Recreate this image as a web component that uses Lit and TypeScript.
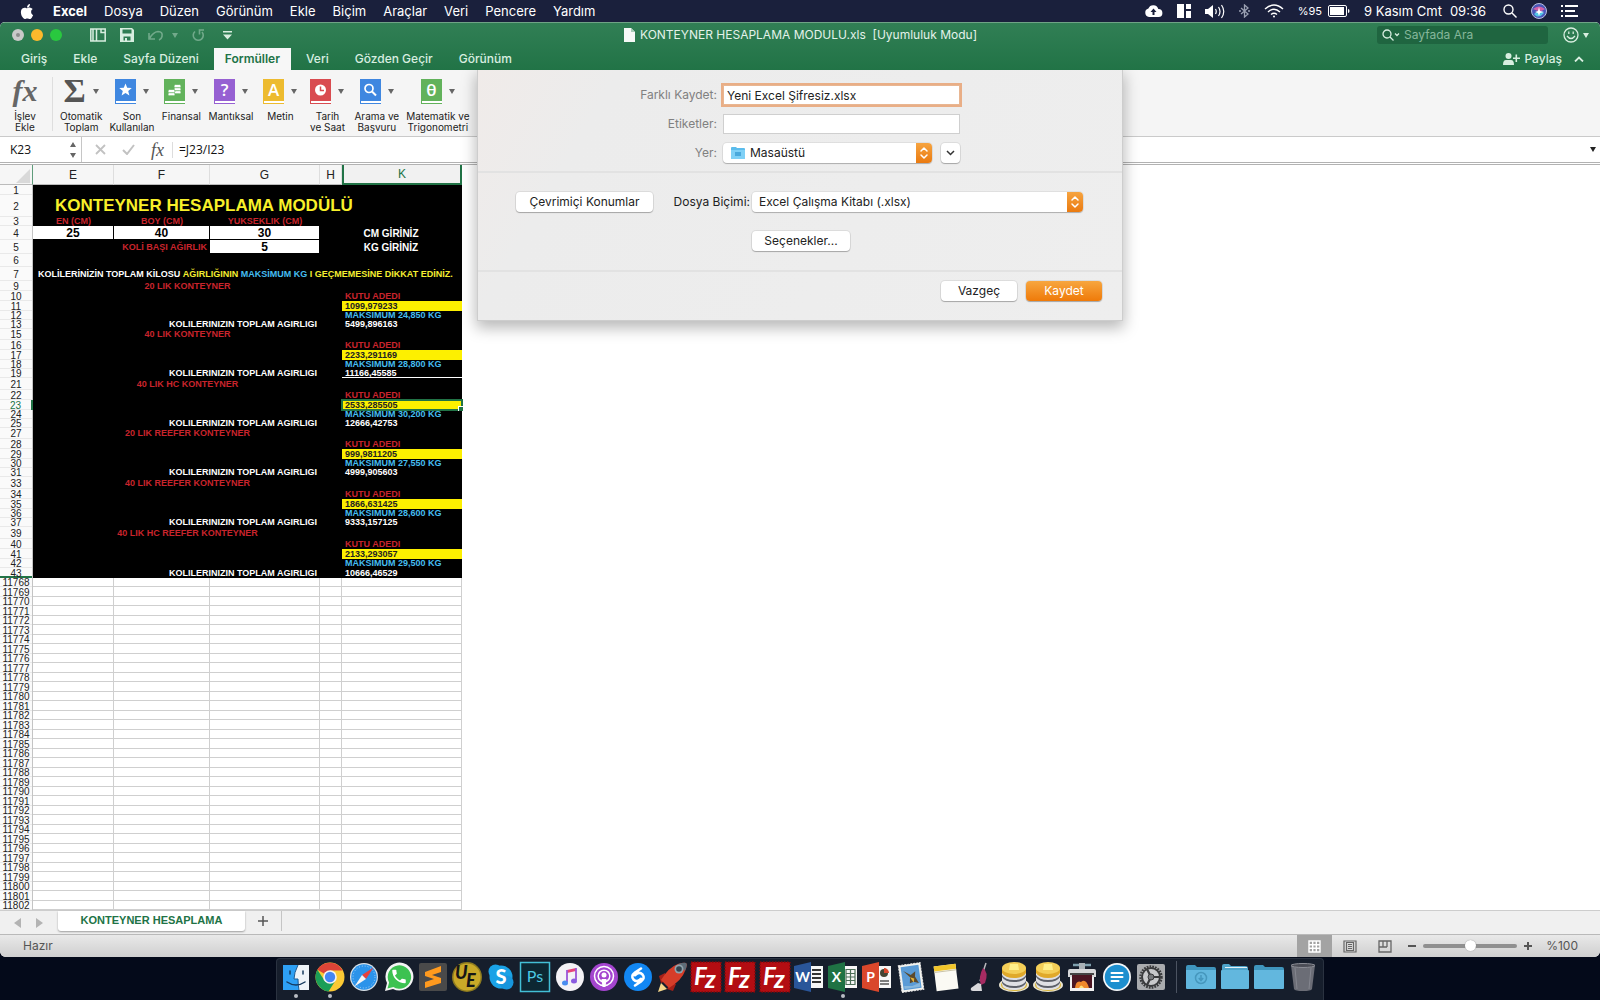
import { LitElement, html, svg, css, nothing, TemplateResult } from "lit";
import { customElement } from "lit/decorators.js";
import { classMap } from "lit/directives/class-map.js";
import { styleMap } from "lit/directives/style-map.js";

/* ---------- Sheet data ---------- */

interface Row {
  n: number;
  h: number;
  kind: string;
  a?: string;
  b?: string;
}

const containers: [string, string, string, string, number][] = [
  ["20 LIK KONTEYNER", "1099,979233", "24,850", "5499,896163", 10],
  ["40 LIK KONTEYNER", "2233,291169", "28,800", "11166,45585", 11],
  ["40 LIK HC KONTEYNER", "2533,285505", "30,200", "12666,42753", 12],
  ["20 LIK REEFER KONTEYNER", "999,9811205", "27,550", "4999,905603", 11],
  ["40 LIK REEFER KONTEYNER", "1866,631425", "28,600", "9333,157125", 12],
  ["40 LIK HC REEFER KONTEYNER", "2133,293057", "29,500", "10666,46529", 12],
];

const rows: Row[] = [
  { n: 1, h: 10, kind: "blank" },
  { n: 2, h: 22, kind: "title" },
  { n: 3, h: 9, kind: "dims" },
  { n: 4, h: 14, kind: "values" },
  { n: 5, h: 14, kind: "weight" },
  { n: 6, h: 13, kind: "blank" },
  { n: 7, h: 14, kind: "warning" },
];
containers.forEach(([name, count, max, total, h], i) => {
  const n = 9 + i * 6;
  rows.push(
    { n, h, kind: "name", a: name },
    { n: n + 1, h: 10, kind: "label" },
    { n: n + 2, h: 10, kind: "count", a: count },
    { n: n + 3, h: 9, kind: "max", a: `MAKSIMUM ${max} KG` },
    { n: n + 4, h: n === 39 ? 10 : 9, kind: "total", a: "KOLILERINIZIN TOPLAM AGIRLIGI", b: total },
  );
});
for (let i = 0; i < 35; i++) {
  rows.push({ n: 11768 + i, h: i % 2 ? 10 : 9, kind: "empty" });
}

@customElement("excel-sheet")
export class ExcelSheet extends LitElement {
  static styles = css`
    :host {
      display: block;
      flex: 1 1 0;
      min-height: 0;
      overflow: hidden;
      background: #fff;
    }
    table,
    thead,
    tbody {
      display: block;
    }
    table {
      font: bold 9px/9px "Liberation Sans", Arial, sans-serif;
      width: max-content;
    }
    tr {
      display: grid;
      grid-template-columns: 33px 81px 96px 110px 22px 120px;
    }
    th,
    td {
      box-sizing: border-box;
      padding: 0;
      display: flex;
      align-items: center;
      justify-content: center;
      white-space: nowrap;
      min-width: 0;
      min-height: 0;
    }
    .head {
      height: 20px;
    }
    .head th {
      font-size: 12px;
      line-height: 14px;
      font-weight: 400;
      color: #222;
      background: #f6f6f6;
      border-right: 1px solid #dedede;
      border-bottom: 1px solid #bbb;
    }
    .head .corner {
      border-right: 1px solid #5f9c7b;
      justify-content: flex-end;
      align-items: flex-end;
      padding: 0 2px 1px 0;
    }
    .head .picked {
      background: #f1f1f1;
      color: #217346;
      border: 2px solid #217346;
      border-top: 0;
    }
    .num {
      font-size: 10px;
      line-height: 9px;
      font-weight: 400;
      color: #222;
      background: #fafafa;
      border-right: 1px solid #c4c4c4;
      box-shadow: inset 0 -1px #e9e9e9;
    }
    .num.current {
      color: #217346;
      border-right: 2px solid #217346;
    }
    .num.frozen {
      box-shadow: inset 0 -2px #217346;
    }
    .dark {
      background: #000;
      color: #fff;
    }
    .span5 {
      grid-column: span 5;
    }
    .span4 {
      grid-column: span 4;
    }
    .span2 {
      grid-column: span 2;
    }
    .span3 {
      grid-column: span 3;
    }
    .title td {
      justify-content: flex-start;
      padding-left: 22px;
      font-size: 17px;
      line-height: 20px;
      color: #f8f02a;
    }
    .red {
      color: #c9242c;
    }
    .yellow {
      color: #f5ee31;
    }
    .cyan {
      color: #45bdf0;
    }
    .right {
      justify-content: flex-end;
      padding-right: 3px;
    }
    .left {
      justify-content: flex-start;
      padding-left: 3px;
    }
    .field {
      background: #fff;
      color: #000;
      font-size: 12px;
      line-height: 12px;
      border-right: 1px solid #000;
      border-bottom: 1px solid #000;
    }
    .unit {
      font-size: 10px;
      padding-right: 22px;
    }
    .warning td {
      justify-content: flex-start;
      padding-left: 5px;
      white-space: pre;
    }
    .count .left {
      background: #fdf000;
      color: #222;
    }
    .total .line {
      border-bottom: 1px solid #fff;
    }
    .count .active {
      position: relative;
      z-index: 1;
      border: 1px solid #217346;
      outline: 1px solid #217346;
      padding-left: 2px;
    }
    .handle {
      position: absolute;
      right: -2px;
      bottom: -2px;
      width: 4px;
      height: 4px;
      background: #217346;
      border-left: 1px solid #fff;
      border-top: 1px solid #fff;
    }
    .empty td {
      border-right: 1px solid #cfcfcf;
      border-bottom: 1px solid #cfcfcf;
    }
  `;

  private cells(r: Row): TemplateResult | TemplateResult[] {
    switch (r.kind) {
      case "title":
        return html`<td class="dark span5">KONTEYNER HESAPLAMA MODÜLÜ</td>`;
      case "dims":
        return html`<td class="dark red">EN (CM)</td>
          <td class="dark red">BOY (CM)</td>
          <td class="dark red">YUKSEKLIK (CM)</td>
          <td class="dark span2"></td>`;
      case "values":
        return html`<td class="field">25</td>
          <td class="field">40</td>
          <td class="field">30</td>
          <td class="dark"></td>
          <td class="dark unit">CM GİRİNİZ</td>`;
      case "weight":
        return html`<td class="dark red span2 right">KOLİ BAŞI AĞIRLIK</td>
          <td class="field">5</td>
          <td class="dark"></td>
          <td class="dark unit">KG GİRİNİZ</td>`;
      case "warning":
        return html`<td class="dark span5"><span>KOLİLERİNİZİN TOPLAM KİLOSU </span><span class="yellow">AĞIRLIĞININ </span><span class="cyan">MAKSİMUM KG </span><span class="yellow">I GEÇMEMESİNE DİKKAT EDİNİZ.</span></td>`;
      case "name":
        return html`<td class="dark red span4">${r.a}</td>
          <td class="dark"></td>`;
      case "label":
        return html`<td class="dark span4"></td>
          <td class="dark red left">KUTU ADEDI</td>`;
      case "count":
        return html`<td class="dark span4"></td>
          <td class=${classMap({ left: true, active: r.n === 23 })}>
            ${r.a}${r.n === 23 ? html`<span class="handle"></span>` : nothing}
          </td>`;
      case "max":
        return html`<td class="dark span4"></td>
          <td class="dark cyan left">${r.a}</td>`;
      case "total":
        return html`<td class="dark span3 right">${r.a}</td>
          <td class="dark"></td>
          <td class=${classMap({ dark: true, left: true, line: r.n === 19 })}>${r.b}</td>`;
      case "empty":
        return [0, 1, 2, 3, 4].map(() => html`<td></td>`);
      default:
        return html`<td class="dark span5"></td>`;
    }
  }

  render() {
    return html`<table aria-label="Konteyner hesaplama">
      <thead>
        <tr class="head">
          <th class="corner" scope="col">
            <svg width="14" height="14" aria-hidden="true"><path d="M14 0v14H0z" fill="#d9d9d9" /></svg>
          </th>
          ${["E", "F", "G", "H", "K"].map(
            (c) => html`<th scope="col" class=${classMap({ picked: c === "K" })}>${c}</th>`,
          )}
        </tr>
      </thead>
      <tbody>
        ${rows.map(
          (r) => html`<tr class=${r.kind} style=${styleMap({ height: `${r.h}px` })}>
            <th scope="row" class=${classMap({ num: true, current: r.n === 23, frozen: r.n === 43 })}>${r.n}</th>
            ${this.cells(r)}
          </tr>`,
        )}
      </tbody>
    </table>`;
  }
}

/* ---------- Save sheet ---------- */

const arrows = html`<svg class="arrows" viewBox="0 0 16 20" width="16" height="20" aria-hidden="true">
  <path d="M5 8l3-3 3 3M5 12l3 3 3-3" fill="none" stroke="#fff" stroke-width="1.5" stroke-linecap="round" stroke-linejoin="round" />
</svg>`;

@customElement("save-sheet")
export class SaveSheet extends LitElement {
  static styles = css`
    :host {
      display: block;
      box-sizing: border-box;
      width: 644px;
      max-width: 100%;
      background: linear-gradient(120deg, #f0ebe9 0, #ececec 18%, #eeeeee);
      box-shadow:
        0 0 0 1px #cdcdcd,
        0 6px 14px 2px rgba(0, 0, 0, 0.28);
      clip-path: inset(0 -30px -40px -30px);
      font-size: 12px;
      line-height: 16px;
      color: #222;
    }
    form {
      display: flex;
      flex-direction: column;
    }
    input,
    select,
    button {
      font: inherit;
      color: inherit;
      margin: 0;
      box-sizing: border-box;
      height: 20px;
    }
    .top {
      display: grid;
      grid-template-columns: 239px 237px;
      column-gap: 6px;
      row-gap: 9px;
      align-items: center;
      padding: 15px 0 8px;
    }
    .top label {
      text-align: right;
      color: #808080;
    }
    input {
      width: 100%;
      border: 1px solid #cfcfcf;
      background: #fff;
      padding: 0 3px;
      outline: 0;
    }
    .focus {
      border-color: #e8b692;
      box-shadow: 0 0 0 2px #e9ae86;
    }
    .place {
      display: flex;
      gap: 9px;
    }
    .pop {
      display: flex;
      position: relative;
      flex: 1;
      height: 20px;
      border-radius: 4px;
      background: #fff;
      box-shadow:
        0 0 0 1px rgba(0, 0, 0, 0.06),
        0 1px 1px rgba(0, 0, 0, 0.22);
    }
    .pop select {
      appearance: none;
      border: 0;
      background: none;
      flex: 1;
      min-width: 0;
      padding: 0 20px 0 7px;
      outline: 0;
    }
    .pop .withicon {
      padding-left: 27px;
    }
    .arrows {
      position: absolute;
      right: 0;
      top: 0;
      background: linear-gradient(#f6a440, #ea7a10);
      border-radius: 0 4px 4px 0;
      pointer-events: none;
    }
    .folder {
      position: absolute;
      left: 7px;
      top: 3px;
    }
    button {
      border: 0;
      border-radius: 4px;
      background: #fff;
      box-shadow:
        0 0 0 1px rgba(0, 0, 0, 0.07),
        0 1px 1px rgba(0, 0, 0, 0.25);
      padding: 0;
    }
    .more {
      width: 19px;
      display: grid;
      place-items: center;
    }
    .mid {
      display: grid;
      grid-template-columns: 137px 99px 331px;
      row-gap: 19px;
      align-items: center;
      padding: 19px 39px 19px 38px;
      border-top: 2px solid #e2e2e2;
      border-bottom: 2px solid #e2e2e2;
    }
    .mid label {
      text-align: right;
      padding-right: 2px;
    }
    .options {
      grid-column: 3;
      width: 98px;
    }
    .foot {
      display: flex;
      justify-content: flex-end;
      gap: 9px;
      padding: 9px 20px 19px;
    }
    .foot button {
      width: 76px;
    }
    .foot .save {
      color: #fff;
      background: linear-gradient(#f7a63f, #ef7a09);
    }
  `;

  render() {
    return html`<form @submit=${(e: Event) => e.preventDefault()}>
      <div class="top">
        <label for="name">Farklı Kaydet:</label>
        <input id="name" class="focus" value="Yeni Excel Şifresiz.xlsx" />
        <label for="tags">Etiketler:</label>
        <input id="tags" />
        <label for="where">Yer:</label>
        <div class="place">
          <div class="pop">
            <svg class="folder" width="16" height="14" viewBox="0 0 16 14" aria-hidden="true">
              <path d="M1 2q0-1 1-1h4l1 1h7q1 0 1 1v9q0 1-1 1H2q-1 0-1-1z" fill="#5bbcec" />
              <path d="M1 4h14v8q0 1-1 1H2q-1 0-1-1z" fill="#7fd0f6" />
              <path d="M5 6h6v4H5z" fill="#4aa9dc" />
            </svg>
            <select id="where" class="withicon"><option>Masaüstü</option></select>
            ${arrows}
          </div>
          <button type="button" class="more" aria-label="Genişlet">
            <svg width="9" height="6" aria-hidden="true"><path d="M1 1l3.500 3.500L8 1" fill="none" stroke="#333" stroke-width="1.500" /></svg>
          </button>
        </div>
      </div>
      <div class="mid">
        <button type="button">Çevrimiçi Konumlar</button>
        <label for="format">Dosya Biçimi:</label>
        <div class="pop">
          <select id="format"><option>Excel Çalışma Kitabı (.xlsx)</option></select>
          ${arrows}
        </div>
        <button type="button" class="options">Seçenekler...</button>
      </div>
      <div class="foot">
        <button type="button">Vazgeç</button>
        <button type="submit" class="save">Kaydet</button>
      </div>
    </form>`;
  }
}

/* ---------- Dock ---------- */

const phone =
  "M6.62 10.79c1.44 2.83 3.76 5.14 6.59 6.59l2.2-2.2c.27-.27.67-.36 1.02-.24 1.12.37 2.33.57 3.57.57.55 0 1 .45 1 1V20c0 .55-.45 1-1 1-9.39 0-17-7.61-17-17 0-.55.45-1 1-1h3.5c.55 0 1 .45 1 1 0 1.25.2 2.45.57 3.57.11.35.03.74-.25 1.02l-2.2 2.2z";

const filezilla = svg`<rect x="1" y="1" width="30" height="30" fill="#b30d12" stroke="#7d0a0c" stroke-width="1.500" stroke-dasharray="1.500 1.500"/>
  <text x="4" y="24" font-size="24" font-weight="700" font-style="italic" fill="#fff">F</text>
  <text x="15" y="27" font-size="25" font-weight="700" font-style="italic" fill="#fff">z</text>`;

const office = (color: string, letter: string, page: TemplateResult) => svg`
  <path d="M15 5h15v22H15z" fill="#f7f7f7"/>${page}
  <path d="M1 5l17-4v30L1 27z" fill="${color}"/>
  <text x="9.500" y="21" text-anchor="middle" font-size="14" font-weight="700" fill="#fff">${letter}</text>`;

const database = svg`<ellipse cx="16" cy="24" rx="15" ry="7" fill="#e9e4d0"/>
  <ellipse cx="16" cy="24" rx="13" ry="6" fill="#d9b53a"/>
  <path d="M4 8v15q0 6 12 6t12-6V8z" fill="#dfe0e4"/>
  <path d="M4 14q3 5 12 5t12-5v2q-3 5-12 5T4 16zM4 20q3 5 12 5t12-5v2q-3 5-12 5T4 22z" fill="#5c6069"/>
  <path d="M4 7v5q3 5 12 5t12-5V7z" fill="#e0a92a"/>
  <ellipse cx="16" cy="7" rx="12" ry="6" fill="#f4cf58"/>
  <path d="M12 3h8l1 6H11z" fill="#fff08a"/>`;

const folder = (extra: TemplateResult | typeof nothing = nothing) => svg`
  <path d="M1 6q0-2 2-2h7l2 2h17q2 0 2 2v4H1z" fill="#3f95bd"/>
  <path d="M1 9h30v18q0 1-1 1H2q-1 0-1-1z" fill="#62b7de"/>${extra}`;

const icons: Record<string, TemplateResult> = {
  Finder: svg`<path d="M3 4h26v25H3z" fill="#eef3f8"/><path d="M3 4h15q-4 8-4 14h4q0 6 1 11H3z" fill="#2ea0f4"/>
    <path d="M18 4q-4 8-4 14h4q0 6 1 11" fill="none" stroke="#1b5a92"/><path d="M10 10v3M23 10v3M7 21q9 6 18 0" fill="none" stroke="#163a5e" stroke-width="1.500" stroke-linecap="round"/>`,
  Chrome: svg`<circle cx="16" cy="16" r="14.500" fill="#fbc934"/>
    <path d="M16 16L3.400 8.800A14.500 14.500 0 0 1 28.600 9.500H16z" fill="#dc4437"/>
    <path d="M3.400 8.800A14.500 14.500 0 0 0 14.500 30.400L21.500 19.500 10.500 19.500z" fill="#1b9e57"/>
    <circle cx="16" cy="16" r="6.800" fill="#f3f3f3"/><circle cx="16" cy="16" r="5.200" fill="#4486f4"/>`,
  Safari: svg`<circle cx="16" cy="16" r="14" fill="#d8e1e8"/><circle cx="16" cy="16" r="12.800" fill="#2b93ea"/>
    <circle cx="16" cy="16" r="11" fill="none" stroke="#9fd2fa" stroke-dasharray="1 1.900"/>
    <path d="M25.500 6.500L14 14l4 4z" fill="#e8413c"/><path d="M6.500 25.500L14 14l4 4z" fill="#f5f5f5"/>`,
  WhatsApp: svg`<path d="M2 30l2-8A14 14 0 1 1 10 28z" fill="#f4f4f4"/><path d="M4.500 27.500l1.600-6A11.700 11.700 0 1 1 10.400 26z" fill="#3cc251"/>
    <path d="${phone}" transform="translate(7 6.500) scale(.75)" fill="#fff"/>`,
  "Sublime Text": svg`<rect x="2" y="2" width="28" height="28" rx="2" fill="#4a4a4a"/>
    <path d="M8 11l16-6v6l-9 3 9 3v5L8 27v-6l9-3-9-3z" fill="#ff9a1e"/>`,
  UltraEdit: svg`<circle cx="16" cy="16" r="15" fill="#8d7a1f"/><circle cx="16" cy="16" r="13.500" fill="#c9a928"/>
    <text x="4" y="18" font-size="18" font-weight="900" font-style="italic" fill="#161616">U</text>
    <text x="15" y="26" font-size="18" font-weight="900" font-style="italic" fill="#161616">E</text>`,
  Skype: svg`<circle cx="16" cy="16" r="11.500" fill="#1aa2e6"/><circle cx="10.500" cy="10.500" r="7" fill="#1aa2e6"/><circle cx="21.500" cy="21.500" r="7" fill="#1795dc"/>
    <text x="16" y="23" text-anchor="middle" font-size="20" font-weight="900" fill="#fff">S</text>`,
  Photoshop: svg`<rect x="1.500" y="1.500" width="29" height="29" fill="#0d2733" stroke="#43bfd6" stroke-width="1.500"/>
    <text x="16" y="21" text-anchor="middle" font-size="16" fill="#4cc9e4">Ps</text>`,
  Music: svg`<circle cx="16" cy="16" r="14" fill="#f4f2f6"/><path d="M13 9l9-2v3l-9 2z" fill="#e8457a"/>
    <path d="M13 9v12M22 7v12" stroke="#9c55d8" stroke-width="1.800"/><ellipse cx="11" cy="22" rx="3" ry="2.500" fill="#4a8df0"/><ellipse cx="20" cy="20" rx="3" ry="2.500" fill="#8a5be0"/>`,
  Podcasts: svg`<circle cx="16" cy="16" r="14" fill="#a445cf"/><circle cx="16" cy="15" r="9.500" fill="none" stroke="#fff" stroke-width="1.500"/>
    <circle cx="16" cy="15" r="5.800" fill="none" stroke="#fff" stroke-width="1.500"/><circle cx="16" cy="14" r="2.500" fill="#fff"/>
    <path d="M13.500 18h5l-1 8h-3z" fill="#fff"/>`,
  Shazam: svg`<circle cx="16" cy="16" r="14" fill="#1287f3"/>
    <path d="M19 7.500l-6 4q-4.500 3.500-1.500 7 3 3 6 .5l1.500-1.200M13 24.500l6-4q4.500-3.500 1.500-7-3-3-6-.5l-1.500 1.200" fill="none" stroke="#fff" stroke-width="2.600" stroke-linecap="round"/>`,
  Rocket: svg`<path d="M5 22l-3 9 9-3z" fill="#f6d78a"/><path d="M9 12l-6 3 2 7 5-2zM20 23l-3 7-6-2 3-5z" fill="#a52018"/>
    <path d="M22 3q6-2 8-1t-1 8q-3 9-16 17l-8-8Q13 6 22 3z" fill="#d63d29"/>
    <path d="M22 3q6-2 8-1t-1 8z" fill="#5e6c78"/><circle cx="23" cy="8" r="4.500" fill="#8fa3ad"/><circle cx="23" cy="8" r="2.800" fill="#33434e"/>`,
  FileZilla: filezilla,
  "FileZilla 2": filezilla,
  "FileZilla 3": filezilla,
  Word: office("#2a5699", "W", svg`<path d="M19 9h9M19 13h9M19 17h9M19 21h9" stroke="#333" stroke-width="1.800"/>`),
  Excel: office("#1f7244", "X", svg`<path d="M19 8.500h9v15h-9zM19 12.500h9M19 16h9M19 19.500h9M23.500 8.500v15" fill="none" stroke="#4c6e58" stroke-width="1.200"/>`),
  PowerPoint: office("#d9472b", "P", svg`<circle cx="23" cy="12" r="4" fill="#443"/><path d="M23 12V7a5 5 0 0 1 5 5z" fill="#d9472b"/><path d="M19 20h9M19 23h9" stroke="#555" stroke-width="1.300"/>`),
  Mail: svg`<g transform="rotate(-8 16 16)"><path d="M5 3h22v27H5z" fill="#f3f3ee" stroke="#e6e6e6" stroke-dasharray="2 1"/><path d="M7 5h18v23H7z" fill="#5a9bd6"/>
    <path d="M9 9l7 5 5-3-1 5 3 7-5-2-4 1 1-6z" fill="#5c4a2c"/><path d="M15 16l4 2-1 4z" fill="#e2b13a"/><path d="M8 24l8 1 8-2v4H8z" fill="#86b7dd"/></g>`,
  Notes: svg`<g transform="rotate(-7 16 16)"><path d="M5 4h22v25H5z" fill="#fbfaf4"/><path d="M5 4h22v5H5z" fill="#f2c62b"/><path d="M5 10h22" stroke="#c9c3a8"/></g>`,
  Cleaner: svg`<path d="M16 20L22 2" stroke="#b9b9bd" stroke-width="1.500"/><path d="M19 7q6 4 2 15l-4 2q-3-8 2-17z" fill="#a62b62"/>
    <path d="M14 22l-7 5q-1 3 2 3h9l-1-7z" fill="#d9d9dc"/>`,
  "Sequel Pro": database,
  "Sequel Pro 2": database,
  Grabber: svg`<path d="M7 4h18" stroke="#7fa0ae" stroke-width="2.500"/><path d="M13 2h6v7h-6z" fill="#a9b1b6"/><path d="M2 10q0-2 2-2h24q2 0 2 2v6H2z" fill="#d7d8da"/>
    <path d="M4 12h24v2H4z" fill="#444"/><path d="M4 16h24v14H4z" fill="#f1f1f1"/><path d="M6 14h20v13H6z" fill="#4b1522"/><path d="M9 27q1-8 6-6 5-4 8 6z" fill="#f0882c"/><path d="M13 27q2-5 5 0z" fill="#ffe07a"/>`,
  Teamwork: svg`<circle cx="16" cy="16" r="14" fill="#f5f8fa"/><circle cx="16" cy="16" r="12.300" fill="#1d8fcf"/>
    <path d="M10.500 12h11M10.500 16h11M10.500 20h7" stroke="#fff" stroke-width="2" stroke-linecap="round"/>`,
  Ayarlar: svg`<rect x="2" y="3" width="28" height="26" rx="2" fill="#a9abae"/><circle cx="16" cy="16" r="10.500" fill="#c8c9cb" stroke="#3a3b3d" stroke-width="2.400" stroke-dasharray="1.800 1"/>
    <circle cx="16" cy="16" r="9" fill="none" stroke="#3a3b3d" stroke-width="2"/><path d="M16 16l-4-8M16 16h9M16 16l-4 8" stroke="#3a3b3d" stroke-width="2.200"/><circle cx="16" cy="16" r="3" fill="#77797c" stroke="#3a3b3d"/>`,
  İndirilenler: folder(svg`<circle cx="16" cy="17" r="5.500" fill="none" stroke="#4697bd" stroke-width="1.500"/><path d="M16 14v5M13.800 17l2.200 2.500 2.200-2.500" fill="none" stroke="#4697bd" stroke-width="1.500"/>`),
  Belgeler: svg`<path d="M3 5q0-2 2-2h5l2 2h14q3 0 3 2v6H3z" fill="#4ea3c9"/><path d="M6 6.500h22" stroke="#e3eef3"/><path d="M2 10q0-1 1-1h26q1 0 1 1v17q0 1-1 1H3q-1 0-1-1z" fill="#62b7de"/>`,
  Klasör: folder(),
  "Çöp Sepeti": svg`<path d="M4 4h24l-3 24q-1 2-9 2t-9-2z" fill="#6b6d76"/><path d="M8 7l2 21M24 7l-2 21" stroke="#84868f"/><ellipse cx="16" cy="4.500" rx="12" ry="2" fill="#4b4d56" stroke="#8c8e96"/>`,
};

const running = new Set(["Finder", "Chrome", "Excel"]);

@customElement("mac-dock")
export class MacDock extends LitElement {
  static styles = css`
    :host {
      display: flex;
      justify-content: center;
      height: 42px;
    }
    nav {
      display: flex;
      box-sizing: border-box;
      width: 90%;
      max-width: 1048px;
      padding: 2px 4px 0 3px;
      background: #161e2c;
      border: 1px solid #2a3240;
      border-width: 1px 1px 0;
      border-radius: 4px 4px 0 0;
    }
    .apps {
      flex: 1;
      min-width: 0;
      display: flex;
      justify-content: space-between;
    }
    .files {
      display: flex;
      gap: 2px;
    }
    .bar {
      width: 1px;
      height: 32px;
      margin: 0 8px 0 9px;
      background: #4b5361;
    }
    button {
      display: flex;
      flex-direction: column;
      align-items: center;
      gap: 1px;
      padding: 0;
      border: 0;
      background: none;
    }
    .dot {
      width: 4px;
      height: 4px;
      border-radius: 50%;
      background: #b9bdc4;
    }
    text {
      font-family: Lato, "Liberation Sans", sans-serif;
    }
  `;

  private item(name: string) {
    return html`<button type="button" aria-label=${name}>
      <svg width="32" height="32" viewBox="0 0 32 32" aria-hidden="true">${icons[name]}</svg>
      ${running.has(name) ? html`<span class="dot"></span>` : nothing}
    </button>`;
  }

  render() {
    const names = Object.keys(icons);
    return html`<nav aria-label="Dock">
      <div class="apps">${names.slice(0, -4).map((n) => this.item(n))}</div>
      <div class="bar"></div>
      <div class="files">${names.slice(-4).map((n) => this.item(n))}</div>
    </nav>`;
  }
}

/* ---------- Application ---------- */

const caret = html`<svg class="caret" width="6" height="5" aria-hidden="true"><path d="M0 0h6L3 5z" fill="currentColor" /></svg>`;

const book = (fill: string, glyph: TemplateResult) => html`<svg width="21" height="25" viewBox="0 0 21 25" aria-hidden="true">
  <path d="M0 0h21v25H0z" fill="${fill}" />
  <path d="M1 22h20v2H1z" fill="#fff" />
  ${glyph}
</svg>`;

const letter = (t: string) => svg`<text x="10.500" y="17" text-anchor="middle" font-size="17" font-weight="600" fill="#fff">${t}</text>`;

const functions: [string[], TemplateResult][] = [
  [["Otomatik", "Toplam"], html`<span class="sigma">Σ</span>`],
  [["Son", "Kullanılan"], book("#3f87e0", svg`<path d="M10.500 4.500l1.700 4.300 4.600.3-3.600 2.900 1.200 4.500-3.900-2.500-3.900 2.500 1.200-4.500-3.600-2.900 4.600-.3z" fill="#fff"/>`)],
  [["Finansal"], book("#62b25b", svg`<g fill="#fff" stroke="#62b25b" stroke-width=".7"><rect x="10" y="11.500" width="7" height="3.200" rx="1.500"/><rect x="10" y="8.500" width="7" height="3.200" rx="1.500"/><rect x="10" y="5.500" width="7" height="3.200" rx="1.500"/><rect x="4" y="13.500" width="7" height="3.200" rx="1.500"/><rect x="4" y="10.500" width="7" height="3.200" rx="1.500"/></g>`)],
  [["Mantıksal"], book("#9660d2", letter("?"))],
  [["Metin"], book("#edbb2f", letter("A"))],
  [["Tarih", "ve Saat"], book("#d94b50", svg`<circle cx="10.500" cy="11" r="5.500" fill="#fff"/><path d="M10.500 7.500v4h3.500" fill="none" stroke="#d94b50" stroke-width="1.500"/>`)],
  [["Arama ve", "Başvuru"], book("#3f87e0", svg`<circle cx="9" cy="9.500" r="4" fill="none" stroke="#fff" stroke-width="1.700"/><path d="M12 12.500l4 4" stroke="#fff" stroke-width="2"/>`)],
  [["Matematik ve", "Trigonometri"], book("#62b25b", letter("θ"))],
];

const siteMenus = ["Dosya", "Düzen", "Görünüm", "Ekle", "Biçim", "Araçlar", "Veri", "Pencere", "Yardım"];
const tabs = ["Giriş", "Ekle", "Sayfa Düzeni", "Formüller", "Veri", "Gözden Geçir", "Görünüm"];

const apple =
  "M12.152 6.896c-.948 0-2.415-1.078-3.96-1.04-2.04.027-3.91 1.183-4.961 3.014-2.117 3.675-.546 9.103 1.519 12.09 1.013 1.454 2.208 3.09 3.792 3.039 1.52-.065 2.09-.987 3.935-.987 1.831 0 2.35.987 3.96.948 1.637-.026 2.676-1.48 3.676-2.948 1.156-1.688 1.636-3.325 1.662-3.415-.039-.013-3.182-1.221-3.22-4.857-.026-3.04 2.48-4.494 2.597-4.559-1.429-2.09-3.623-2.324-4.39-2.376-2-.156-3.675 1.09-4.61 1.09zM15.53 3.83c.843-1.012 1.4-2.427 1.245-3.83-1.207.052-2.662.805-3.532 1.818-.78.896-1.454 2.338-1.273 3.714 1.338.104 2.715-.688 3.559-1.701";

@customElement("app-root")
export class AppRoot extends LitElement {
  static styles = css`
    :host {
      display: flex;
      flex-direction: column;
      height: 100vh;
      overflow: hidden;
      background: linear-gradient(#1b2140 0 40px, #040a1a 900px);
      font-family: Inter, "Noto Sans", sans-serif;
      font-size: 12px;
      line-height: 16px;
      color: #222;
    }
    button,
    input {
      font: inherit;
      color: inherit;
      margin: 0;
      padding: 0;
      border: 0;
      background: none;
    }
    svg {
      display: block;
      flex: none;
    }
    .menubar {
      height: 22px;
      flex: none;
      display: flex;
      align-items: center;
      justify-content: space-between;
      padding: 0 22px 0 20px;
      color: #fff;
      font-size: 13px;
      background: #1a203c;
    }
    .menus,
    .status {
      display: flex;
      align-items: center;
    }
    .menus {
      gap: 17px;
    }
    .menus .app {
      font-weight: 700;
      margin-left: 2px;
    }
    .status {
      gap: 14px;
    }
    .battery {
      display: flex;
      align-items: center;
      gap: 6px;
      font-size: 11px;
    }
    .clock {
      display: flex;
      gap: 8px;
      margin-right: 3px;
    }
    .window {
      flex: 1;
      min-height: 0;
      position: relative;
      display: flex;
      flex-direction: column;
      border-radius: 5px 5px 6px 6px;
      overflow: hidden;
      background: #fff;
    }
    .green {
      flex: none;
      background: linear-gradient(#317f55, #217346);
      color: #d8eee0;
      border-top: 1px solid #6fa386;
      box-sizing: border-box;
      height: 48px;
      display: flex;
      flex-direction: column;
      justify-content: space-between;
    }
    .titlebar {
      display: grid;
      grid-template-columns: 1fr auto 1fr;
      align-items: center;
      height: 24px;
      padding: 0 11px 0 12px;
    }
    .tools,
    .lights,
    .doc,
    .find {
      display: flex;
      align-items: center;
    }
    .lights {
      gap: 7px;
      margin-right: 14px;
    }
    .light {
      width: 12px;
      height: 12px;
      border-radius: 50%;
      background: #c9c9c9;
      display: grid;
      place-items: center;
    }
    .light::after {
      content: "";
      width: 4px;
      height: 4px;
      border-radius: 50%;
      background: #8c8c8c;
    }
    .light.min {
      background: #fdb92c;
    }
    .light.max {
      background: #29c83f;
    }
    .light.min::after,
    .light.max::after {
      content: none;
    }
    .tools {
      gap: 14px;
    }
    .faded {
      opacity: 0.4;
      display: flex;
      align-items: center;
      gap: 8px;
    }
    .faded.redo {
      margin-right: 4px;
    }
    .doc {
      gap: 5px;
      white-space: pre;
      color: #e4f2ea;
    }
    .find {
      justify-content: flex-end;
      gap: 15px;
    }
    .search {
      box-sizing: border-box;
      display: flex;
      align-items: center;
      gap: 4px;
      width: 171px;
      height: 18px;
      padding: 0 5px;
      border-radius: 3px;
      background: #1f6540;
    }
    .search input {
      flex: 1;
      min-width: 0;
      outline: 0;
    }
    .search input::placeholder {
      color: #86b79b;
      opacity: 1;
    }
    .smile {
      display: flex;
      align-items: center;
      gap: 4px;
    }
    .tabrow {
      display: flex;
      justify-content: space-between;
      align-items: stretch;
      height: 22px;
      padding: 0 16px 0 10px;
      font-weight: 500;
    }
    .tabs {
      display: flex;
      gap: 4px;
    }
    .tab {
      padding: 0 11px;
    }
    .tab.on {
      background: #f7f7f7;
      color: #217346;
      font-weight: 600;
    }
    .share {
      display: flex;
      align-items: center;
      gap: 4px;
      font-weight: 500;
    }
    .share .up {
      margin-left: 8px;
    }
    .ribbon {
      flex: none;
      box-sizing: border-box;
      height: 67px;
      display: flex;
      align-items: flex-start;
      gap: 7px;
      padding: 7px 0 0 5px;
      background: #f5f5f5;
      border-bottom: 1px solid #cacaca;
      font-size: 10px;
      line-height: 11px;
    }
    .fn {
      display: flex;
      flex-direction: column;
      align-items: center;
      gap: 6px;
      color: #222;
      min-width: 40px;
    }
    .fn .face {
      display: flex;
      align-items: center;
      gap: 7px;
      height: 28px;
      color: #666;
    }
    .rule {
      width: 1px;
      height: 54px;
      background: #dedede;
    }
    .face text {
      font-family: "Open Sans", sans-serif;
    }
    .sigma,
    .fx {
      font-family: "Liberation Serif", serif;
      color: #555;
    }
    .sigma {
      font-size: 34px;
      line-height: 28px;
      font-weight: 700;
    }
    .fx {
      font-style: italic;
      font-weight: 700;
      font-size: 30px;
      line-height: 28px;
    }
    .fx.small {
      font-size: 18px;
      line-height: 18px;
      font-weight: 400;
    }
    .formula {
      flex: none;
      box-sizing: border-box;
      height: 28px;
      display: flex;
      align-items: center;
      background: #fff;
      border-bottom: 3px double #b2b2b2;
      font-family: "Open Sans", sans-serif;
      padding-right: 4px;
    }
    .namebox {
      box-sizing: border-box;
      width: 82px;
      align-self: stretch;
      display: flex;
      align-items: center;
      border-right: 1px solid #c6c6c6;
      padding: 0 5px 0 10px;
    }
    .namebox input {
      flex: 1;
      min-width: 0;
    }
    .actions {
      display: flex;
      align-items: center;
      gap: 16px;
      padding: 0 8px 0 13px;
      height: 16px;
      border-right: 1px solid #ddd;
    }
    .expr {
      flex: 1;
      padding-left: 6px;
    }
    .expr,
    .namebox input {
      color: #111;
      outline: 0;
    }
    .sheets {
      flex: none;
      box-sizing: border-box;
      height: 25px;
      display: flex;
      align-items: flex-start;
      background: #f0f0f0;
      border-top: 1px solid #cdcdcd;
      border-bottom: 1px solid #b9b9b9;
      color: #b3b3b3;
    }
    .arrowset {
      display: flex;
      gap: 15px;
      padding: 7px 15px 0 14px;
    }
    .sheettab {
      width: 187px;
      height: 20px;
      padding-bottom: 2px;
      background: #fff;
      color: #217346;
      font-weight: 700;
      font-size: 11px;
      border-radius: 0 0 3px 3px;
      box-shadow: 0 1px 2px rgba(0, 0, 0, 0.35);
      font-family: "Liberation Sans", Arial, sans-serif;
    }
    .add {
      width: 37px;
      height: 20px;
      display: grid;
      place-items: center;
      border-right: 1px solid #c5c5c5;
    }
    .foot {
      flex: none;
      height: 22px;
      display: flex;
      align-items: center;
      justify-content: space-between;
      padding: 0 22px 0 23px;
      background: linear-gradient(#e9e9e9, #cfcfcf);
      color: #555;
    }
    .zoom {
      display: flex;
      align-items: center;
      align-self: stretch;
    }
    .view {
      width: 35px;
      align-self: stretch;
      display: grid;
      place-items: center;
    }
    .view.on {
      background: #a3a3a3;
    }
    .minus {
      margin-left: 6px;
    }
    .zoom input {
      appearance: none;
      width: 94px;
      height: 12px;
      margin: 0 7px;
    }
    .zoom input::-webkit-slider-runnable-track {
      height: 4px;
      border-radius: 2px;
      background: #8f8f8f;
    }
    .zoom input::-webkit-slider-thumb {
      appearance: none;
      width: 11px;
      height: 11px;
      margin-top: -4px;
      border-radius: 50%;
      background: #fff;
      box-shadow: 0 0 1px #777;
    }
    .percent {
      margin-left: 14px;
    }
    .sheet {
      position: absolute;
      top: 48px;
      left: 0;
      right: 0;
      margin: 0 auto;
    }
    mac-dock {
      flex: none;
      margin-top: 1px;
    }
  `;

  private menubar() {
    return html`<header class="menubar">
      <nav class="menus" aria-label="Menü">
        <svg width="14" height="15" viewBox="2 0 20 24" fill="#fff" aria-hidden="true"><path d=${apple} /></svg>
        <button class="app">Excel</button>
        ${siteMenus.map((m) => html`<button>${m}</button>`)}
      </nav>
      <div class="status">
        <svg width="19" height="14" viewBox="0 0 19 14" aria-hidden="true">
          <path d="M5 13a4.300 4.300 0 0 1-.6-8.400A5.200 5.200 0 0 1 14.300 5 4 4 0 0 1 14.500 13z" fill="#fff" />
          <path d="M9.500 4.500l3 3.500h-2v3h-2V8h-2z" fill="#1a203c" />
        </svg>
        <svg width="14" height="14" aria-hidden="true"><path d="M0 0h7v14H0zM9 0h5v5H9zM9 7h5v7H9z" fill="#fff" /></svg>
        <svg width="20" height="15" viewBox="0 0 20 15" fill="none" stroke="#fff" aria-hidden="true">
          <path d="M0 5h3l5-4v13l-5-4H0z" fill="#fff" stroke="none" />
          <path d="M10.500 5q1.500 2.500 0 5M13.500 3q3 4.500 0 9M16.500 1q4.500 6.500 0 13" stroke-width="1.200" />
        </svg>
        <svg width="11" height="14" viewBox="0 0 11 14" fill="none" stroke="#9aa0b2" aria-hidden="true">
          <path d="M2 4l7 6-3.500 3V1L9 4l-7 6" stroke-width="1.300" /><path d="M0 7h2M9 7h2" stroke-width="1.500" />
        </svg>
        <svg width="20" height="14" viewBox="0 0 20 14" fill="none" stroke="#fff" stroke-width="1.400" aria-hidden="true">
          <path d="M1 5q9-8 18 0M4 8q6-5.500 12 0M7 10.500q3-2.500 6 0" /><circle cx="10" cy="12.500" r="1" fill="#fff" stroke="none" />
        </svg>
        <span class="battery">%95
          <svg width="22" height="12" viewBox="0 0 22 12" aria-hidden="true">
            <rect x=".5" y=".5" width="18" height="11" rx="1.500" fill="none" stroke="#fff" /><path d="M2 2h14v8H2zM20 4q1.500 0 1.500 2T20 8z" fill="#fff" />
          </svg>
        </span>
        <span class="clock"><span>9 Kasım Cmt</span><span>09:36</span></span>
        <svg width="14" height="14" fill="none" stroke="#fff" stroke-width="1.400" aria-hidden="true"><circle cx="5.500" cy="5.500" r="4.500" /><path d="M9 9l4.500 4.500" /></svg>
        <svg width="16" height="16" viewBox="0 0 16 16" aria-hidden="true">
          <circle cx="8" cy="8" r="7.500" fill="#4a57b8" stroke="#b9bfe0" /><path d="M2 6q6-5 12 0-4 3-7 2z" fill="#d45fa8" />
          <path d="M3 11q5-5 10-1-4 5-8 3z" fill="#53c6e8" /><path d="M8 4l1 4 4 1-4 1-1 3-1-3-3-1 3-1z" fill="#fff" />
        </svg>
        <svg width="17" height="12" stroke="#fff" stroke-width="2" aria-hidden="true"><path d="M0 1h2M4 1h13M0 6h2M4 6h10M0 11h2M4 11h13" /></svg>
      </div>
    </header>`;
  }

  private head() {
    return html`<div class="green">
      <div class="titlebar">
        <div class="tools">
          <div class="lights">
            <button class="light" aria-label="Kapat"></button>
            <button class="light min" aria-label="Küçült"></button>
            <button class="light max" aria-label="Büyüt"></button>
          </div>
          <svg width="16" height="14" viewBox="0 0 16 14" fill="none" stroke="#d8eee0" stroke-width="1.500" aria-hidden="true">
            <path d="M.8 1h14.400v12H.8zM3 1v12M6.500 1v12M11 1v3.500h4" />
          </svg>
          <svg width="14" height="14" viewBox="0 0 14 14" aria-hidden="true">
            <path d="M0 0h12l2 2v12H0zM2.500 1.500v4h9v-4zM3.500 8.500v4h7v-4z" fill="#d8eee0" fill-rule="evenodd" /><path d="M5 10h2v3H5z" fill="#d8eee0" />
          </svg>
          <span class="faded">
            <svg width="16" height="11" viewBox="0 0 16 11" fill="none" stroke="#d8eee0" stroke-width="1.600" aria-hidden="true">
              <path d="M1 3v6h6M1.500 8.500Q5 2 10 1.500q5 0 4 5-.5 2.500-3 3.500" />
            </svg>
            ${caret}
          </span>
          <span class="faded redo">
            <svg width="13" height="13" viewBox="0 0 13 13" fill="none" stroke="#d8eee0" stroke-width="1.600" aria-hidden="true">
              <path d="M3 2.500a5 5 0 1 0 7 .5M7.500 5.500V1H12" />
            </svg>
          </span>
          <svg width="9" height="9" fill="#d8eee0" aria-hidden="true"><path d="M0 0h9v1.500H0zM0 3.500h9L4.500 8.500z" /></svg>
        </div>
        <div class="doc">
          <svg width="11" height="14" aria-hidden="true"><path d="M0 0h7l4 4v10H0z" fill="#f6f9f7" /><path d="M7 0v4h4z" fill="#a9cdb8" /></svg>
          <span>KONTEYNER HESAPLAMA MODULU.xls  [Uyumluluk Modu]</span>
        </div>
        <div class="find">
          <label class="search">
            <svg width="18" height="12" fill="none" stroke="#d8eee0" stroke-width="1.300" aria-hidden="true">
              <circle cx="5" cy="5" r="4" /><path d="M8 8l3.500 3.500M13 4.500l2 2 2-2" />
            </svg>
            <input type="search" aria-label="Sayfada Ara" placeholder="Sayfada Ara" />
          </label>
          <span class="smile">
            <svg width="16" height="16" viewBox="0 0 16 16" fill="none" stroke="#d8eee0" stroke-width="1.300" aria-hidden="true">
              <circle cx="8" cy="8" r="7" /><path d="M4 9q4 5 8 0M5.800 4.500v2.500M10.200 4.500v2.500" />
            </svg>
            ${caret}
          </span>
        </div>
      </div>
      <div class="tabrow">
        <nav class="tabs" aria-label="Şerit">
          ${tabs.map((t) => html`<button class=${classMap({ tab: true, on: t === "Formüller" })}>${t}</button>`)}
        </nav>
        <button class="share">
          <svg width="17" height="12" viewBox="0 0 17 12" fill="#d8eee0" aria-hidden="true">
            <circle cx="5.500" cy="3" r="3" /><path d="M0 12q0-5 3-5h5q3 0 3 5zM12.500 1.500h1.600v3h2.900v1.600h-2.900v3h-1.600v-3H10V4.500h2.500z" />
          </svg>
          Paylaş
          <svg class="up" width="10" height="6" fill="none" stroke="#d8eee0" stroke-width="1.800" aria-hidden="true"><path d="M1 5.500l4-4 4 4" /></svg>
        </button>
      </div>
    </div>`;
  }

  private ribbon() {
    return html`<div class="ribbon">
        <button class="fn"><span class="face fx">fx</span><span>İşlev<br />Ekle</span></button>
        <div class="rule"></div>
        ${functions.map(
          ([lines, icon]) => html`<button class="fn">
            <span class="face">${icon}${caret}</span>
            <span>${lines[0]}${lines[1] ? html`<br />${lines[1]}` : nothing}</span>
          </button>`,
        )}
      </div>
      <div class="formula">
        <div class="namebox">
          <input aria-label="Ad kutusu" value="K23" />
          <svg width="6" height="16" fill="#666" aria-hidden="true"><path d="M0 5h6L3 0zM0 11h6l-3 5z" /></svg>
        </div>
        <div class="actions">
          <svg width="11" height="11" stroke="#c2c2c2" stroke-width="1.800" aria-hidden="true"><path d="M1 1l9 9M10 1l-9 9" /></svg>
          <svg width="13" height="11" stroke="#c2c2c2" stroke-width="2" fill="none" aria-hidden="true"><path d="M1 6l4 4 7-9" /></svg>
          <span class="fx small">fx</span>
        </div>
        <input class="expr" aria-label="Formül" value="=J23/I23" />
        ${caret}
      </div>`;
  }

  private bottom() {
    return html`<div class="sheets">
        <div class="arrowset">
          <svg width="7" height="10" fill="currentColor" aria-hidden="true"><path d="M7 0v10L0 5z" /></svg>
          <svg width="7" height="10" fill="currentColor" aria-hidden="true"><path d="M0 0v10l7-5z" /></svg>
        </div>
        <button class="sheettab">KONTEYNER HESAPLAMA</button>
        <button class="add" aria-label="Sayfa ekle">
          <svg width="10" height="10" stroke="#555" stroke-width="1.500" aria-hidden="true"><path d="M5 0v10M0 5h10" /></svg>
        </button>
      </div>
      <footer class="foot">
        <span>Hazır</span>
        <div class="zoom">
          <button class="view on" aria-label="Normal">
            <svg width="13" height="13" fill="none" stroke="#fff" stroke-width="1.400" aria-hidden="true"><path d="M1 1h11v11H1zM1 4.700h11M1 8.300h11M4.700 1v11M8.300 1v11" /></svg>
          </button>
          <button class="view" aria-label="Sayfa Düzeni">
            <svg width="14" height="13" fill="none" stroke="#666" aria-hidden="true"><path d="M1 1h12v11H1zM3.500 2.500h7v8h-7zM5 4.500h4M5 6.500h4M5 8.500h4" stroke-width="1.200" /></svg>
          </button>
          <button class="view" aria-label="Sayfa Sonu">
            <svg width="14" height="13" fill="none" stroke="#666" stroke-width="1.300" aria-hidden="true"><path d="M1 1h12v11H1zM5 1v6M9 1v6M1 7h8" /></svg>
          </button>
          <svg class="minus" width="8" height="8" stroke="#555" stroke-width="2" aria-hidden="true"><path d="M0 4h8" /></svg>
          <input type="range" aria-label="Yakınlaştırma" min="0" max="200" value="100" />
          <svg width="8" height="8" stroke="#555" stroke-width="2" aria-hidden="true"><path d="M0 4h8M4 0v8" /></svg>
          <span class="percent">%100</span>
        </div>
      </footer>`;
  }

  render() {
    return html`${this.menubar()}
      <main class="window">
        ${this.head()} ${this.ribbon()}
        <excel-sheet></excel-sheet>
        ${this.bottom()}
        <save-sheet class="sheet"></save-sheet>
      </main>
      <mac-dock></mac-dock>`;
  }
}
